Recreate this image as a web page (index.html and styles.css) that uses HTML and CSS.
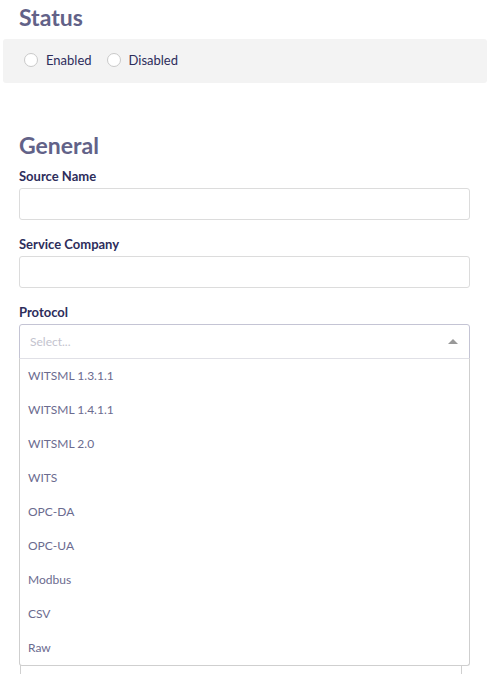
FILE: index.html
```html
<!DOCTYPE html>
<html>
<head>
<meta charset="utf-8">
<link rel="stylesheet" href="styles.css">
</head>
<body>
<div class="page">
  <h2 class="section-title">Status</h2>
  <div class="status-panel">
    <label class="radio"><span class="radio-dot"></span><span>Enabled</span></label>
    <label class="radio"><span class="radio-dot"></span><span>Disabled</span></label>
  </div>

  <h2 class="section-title general">General</h2>
  <div class="form">
    <div class="field">
      <div class="label">Source Name</div>
      <div class="input"></div>
    </div>
    <div class="field">
      <div class="label">Service Company</div>
      <div class="input"></div>
    </div>
    <div class="field">
      <div class="label">Protocol</div>
      <div class="select-wrap">
        <div class="select">
          <span class="placeholder">Select...</span>
          <span class="arrow"></span>
        </div>
        <ul class="menu">
          <li>WITSML 1.3.1.1</li>
          <li>WITSML 1.4.1.1</li>
          <li>WITSML 2.0</li>
          <li>WITS</li>
          <li>OPC-DA</li>
          <li>OPC-UA</li>
          <li>Modbus</li>
          <li>CSV</li>
          <li>Raw</li>
        </ul>
      </div>
      <div class="under-box"></div>
    </div>
  </div>
</div>
</body>
</html>
```

FILE: styles.css
```css
* { box-sizing: border-box; }
html, body {
  margin: 0;
  padding: 0;
  background: #ffffff;
  overflow: hidden;
}
body {
  font-family: "Source Sans Pro", Lato, "Liberation Sans", sans-serif;
  color: #2d2d5b;
}
.page {
  width: 496px;
  height: 674px;
  padding: 0 9px 0 3px;
}
.section-title {
  margin: 0;
  padding: 3px 0 0 16px;
  font-size: 23px;
  line-height: 28px;
  font-weight: 700;
  color: #626288;
}
.status-panel {
  margin-top: 8px;
  height: 44px;
  background: #f3f3f3;
  border-radius: 3px;
  display: flex;
  align-items: center;
  gap: 15px;
  padding: 0 0 2px 21px;
}
.radio {
  display: flex;
  align-items: center;
  gap: 8px;
  font-size: 13px;
  color: #2d2d5b;
}
.radio-dot {
  width: 14px;
  height: 14px;
  border-radius: 50%;
  border: 1px solid #c9c9c9;
  background: #ffffff;
}
.general {
  margin-top: 45px;
}
.form {
  padding: 0 17px 0 16px;
}
.field {
  margin-top: 9px;
}
.label {
  font-size: 13px;
  font-weight: 700;
  line-height: 16px;
  color: #2d2d5b;
  margin-bottom: 4px;
}
.input {
  height: 32px;
  border: 1px solid #dcdcdc;
  border-radius: 3px;
  background: #fff;
}
.field + .field { margin-top: 16px; }
.select-wrap {
  position: relative;
}
.select {
  height: 35px;
  border: 1px solid #c4c4d4;
  border-radius: 3px 3px 0 0;
  display: flex;
  align-items: center;
  justify-content: space-between;
  padding: 0 11px 0 10px;
}
.placeholder {
  font-size: 12px;
  color: #c3c3ce;
}
.arrow {
  width: 0;
  height: 0;
  border-left: 5px solid transparent;
  border-right: 5px solid transparent;
  border-bottom: 5px solid #999999;
}
.menu {
  position: absolute;
  left: 0;
  right: 0;
  top: 34px;
  margin: 0;
  padding: 0;
  list-style: none;
  background: #ffffff;
  border: 1px solid #cfcfcf;
  border-top: 1px solid #e0e0e6;
  border-radius: 0 0 3px 3px;
  z-index: 2;
}
.menu li {
  height: 34px;
  line-height: 34px;
  padding-left: 8px;
  font-size: 12px;
  color: #6b6b8f;
}
.under-box {
  margin: 0 8px 0 1px;
  height: 320px;
  border: 1px solid #d0d0d0;
}
```
